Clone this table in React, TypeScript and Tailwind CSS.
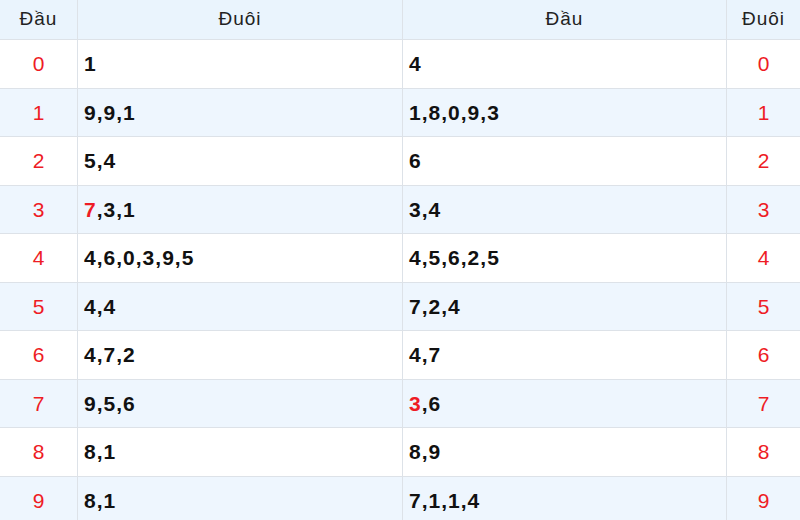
import React from 'react';

const rows = [
    { dau: '0', duoi: ['1'], dau2: ['4'] },
    { dau: '1', duoi: ['9', '9', '1'], dau2: ['1', '8', '0', '9', '3'] },
    { dau: '2', duoi: ['5', '4'], dau2: ['6'] },
    { dau: '3', duoi: ['7*', '3', '1'], dau2: ['3', '4'] },
    { dau: '4', duoi: ['4', '6', '0', '3', '9', '5'], dau2: ['4', '5', '6', '2', '5'] },
    { dau: '5', duoi: ['4', '4'], dau2: ['7', '2', '4'] },
    { dau: '6', duoi: ['4', '7', '2'], dau2: ['4', '7'] },
    { dau: '7', duoi: ['9', '5', '6'], dau2: ['3*', '6'] },
    { dau: '8', duoi: ['8', '1'], dau2: ['8', '9'] },
    { dau: '9', duoi: ['8', '1'], dau2: ['7', '1', '1', '4'] },
];

// '*' marks a number highlighted in red
const Nums = ({ list }: { list: string[] }) => (
    <>
        {list.map((n, i) => (
            <React.Fragment key={i}>
                {i > 0 && ','}
                {n.endsWith('*') ? <span className="text-[#ee1c25]">{n.slice(0, -1)}</span> : n}
            </React.Fragment>
        ))}
    </>
);

const App = () => {
    return (
        <div className="w-[800px] h-[520px] overflow-hidden bg-white font-['Liberation_Sans',Arial,sans-serif]">
            <div className="grid grid-cols-[78px_325px_324px_73px] h-[40px] bg-[#eaf4fd] border-b border-[#dde2e8] text-[19px] tracking-[1px] text-[#222]">
                <div className="flex items-center justify-center border-r border-[#dde2e8]">Đầu</div>
                <div className="flex items-center justify-center border-r border-[#dde2e8]">Đuôi</div>
                <div className="flex items-center justify-center border-r border-[#dde2e8]">Đầu</div>
                <div className="flex items-center justify-center">Đuôi</div>
            </div>
            {rows.map((r, i) => (
                <div
                    key={r.dau}
                    className={`grid grid-cols-[78px_325px_324px_73px] h-[48.5px] border-b border-[#dde2e8] ${i % 2 === 1 ? 'bg-[#eef6fe]' : 'bg-white'}`}
                >
                    <div className="flex items-center justify-center border-r border-[#dde2e8] text-[21px] text-[#ee1c25]">{r.dau}</div>
                    <div className="flex items-center pl-[6px] border-r border-[#dde2e8] text-[21px] font-bold tracking-[1px] text-[#111]">
                        <Nums list={r.duoi} />
                    </div>
                    <div className="flex items-center pl-[6px] border-r border-[#dde2e8] text-[21px] font-bold tracking-[1px] text-[#111]">
                        <Nums list={r.dau2} />
                    </div>
                    <div className="flex items-center justify-center text-[21px] text-[#ee1c25]">{r.dau}</div>
                </div>
            ))}
        </div>
    );
};

export default App;
